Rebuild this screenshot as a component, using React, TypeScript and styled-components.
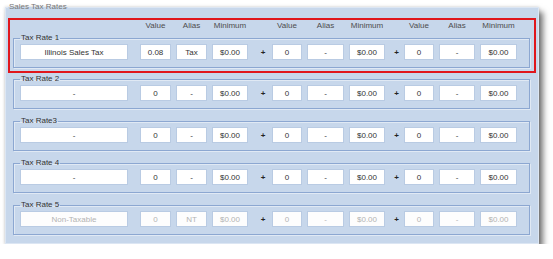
import React, { Fragment } from 'react'
import styled, { createGlobalStyle } from 'styled-components'

const GlobalStyle = createGlobalStyle`
  html, body {
    margin: 0;
    background: #fff;
  }
  body {
    font-family: "Liberation Sans", Arial, sans-serif;
    font-size: 8px;
  }
`

type Rate = { value: string; alias: string; minimum: string }
type TaxRow = { label: string; name: string; rates: Rate[]; disabled?: boolean }

const blank: Rate = { value: '0', alias: '-', minimum: '$0.00' }

const rows: TaxRow[] = [
  { label: 'Tax Rate 1', name: 'Illinois Sales Tax', rates: [{ value: '0.08', alias: 'Tax', minimum: '$0.00' }, blank, blank] },
  { label: 'Tax Rate 2', name: '-', rates: [blank, blank, blank] },
  { label: 'Tax Rate3', name: '-', rates: [blank, blank, blank] },
  { label: 'Tax Rate 4', name: '-', rates: [blank, blank, blank] },
  { label: 'Tax Rate 5', name: 'Non-Taxable', rates: [{ value: '0', alias: 'NT', minimum: '$0.00' }, blank, blank], disabled: true },
]

// name | value alias min | + | value alias min | + | value alias min
const COLUMNS = '115px 31px 31px 36px 14px 30px 37px 36px 9px 30px 36px 37px'

const Page = styled.div`
  padding: 2px 0 0 5px;
`

const Panel = styled.fieldset`
  box-sizing: border-box;
  width: 534px;
  margin: 0;
  padding: 0 8px 8px 7px;
  border: 1px solid #dce6f3;
  background: #c7d7eb;
  box-shadow: 4px 5px 6px rgba(0, 0, 0, 0.55), 0 0 3px rgba(0, 0, 0, 0.18);
  min-inline-size: 0;
`

const PanelTitle = styled.legend`
  margin-left: -5px;
  padding: 0 1px;
  font-size: 8px;
  line-height: 10px;
  color: #777;
`

const Highlight = styled.div`
  margin: 6px -6px 0 -5px;
  padding: 1px 4px 3px 3px;
  border: 2px solid #e0161c;
`

const Columns = styled.div`
  display: grid;
  grid-template-columns: ${COLUMNS};
  column-gap: 5px;
  align-items: center;
`

const Header = styled(Columns)`
  padding-left: 7px;
  line-height: 9px;
`

const HeadLabel = styled.span`
  text-align: center;
  font-size: 8px;
  color: #4d4d4d;
`

const Stack = styled.div`
  display: flex;
  flex-direction: column;
  gap: 7px;
  margin-top: 1px;
`

const Group = styled.fieldset<{ $first?: boolean }>`
  margin: ${({ $first }) => ($first ? '3px 0 0' : '0')};
  padding: 1px 0 7px 6px;
  border: 1px solid #8ca7d1;
  box-shadow: inset 1px 1px 0 rgba(255, 255, 255, 0.45), 1px 1px 0 rgba(255, 255, 255, 0.45);
  min-inline-size: 0;
`

const GroupTitle = styled.legend`
  padding: 0 1px;
  font-size: 8px;
  line-height: 10px;
  color: #333;
`

const Field = styled.input`
  box-sizing: border-box;
  width: 100%;
  height: 16px;
  margin: 0;
  padding: 0;
  border: 1px solid #b9cbe3;
  border-radius: 0;
  background: #fff;
  font: 8px "Liberation Sans", Arial, sans-serif;
  color: #333;
  text-align: center;
  outline: none;

  &:disabled {
    color: #b3b3b3;
    background: #fdfdfd;
  }
`

const NameField = styled(Field)`
  width: 108px;
`

const Plus = styled.span<{ $shift: number }>`
  text-align: center;
  font-size: 8px;
  font-weight: bold;
  color: #222;
  transform: translateX(${({ $shift }) => $shift}px);
`

const headerCells = ['Value', 'Alias', 'Minimum']

const RateGroup = ({ row, first }: { row: TaxRow; first?: boolean }) => (
  <Group $first={first}>
    <GroupTitle>{row.label}</GroupTitle>
    <Columns>
      <NameField readOnly disabled={row.disabled} value={row.name} />
      {row.rates.map((r, i) => (
        <Fragment key={i}>
          {i > 0 && <Plus $shift={i === 1 ? 3 : 2}>+</Plus>}
          <Field readOnly disabled={row.disabled} value={r.value} />
          <Field readOnly disabled={row.disabled} value={r.alias} />
          <Field readOnly disabled={row.disabled} value={r.minimum} />
        </Fragment>
      ))}
    </Columns>
  </Group>
)

export default function App() {
  const [firstRow, ...rest] = rows
  return (
    <Page>
      <GlobalStyle />
      <Panel>
        <PanelTitle>Sales Tax Rates</PanelTitle>
        <Highlight>
          <Header>
            <span />
            {[0, 1, 2].map(i => (
              <Fragment key={i}>
                {i > 0 && <span />}
                {headerCells.map(h => (
                  <HeadLabel key={h}>{h}</HeadLabel>
                ))}
              </Fragment>
            ))}
          </Header>
          <RateGroup row={firstRow} first />
        </Highlight>
        <Stack>
          {rest.map(row => (
            <RateGroup key={row.label} row={row} />
          ))}
        </Stack>
      </Panel>
    </Page>
  )
}
